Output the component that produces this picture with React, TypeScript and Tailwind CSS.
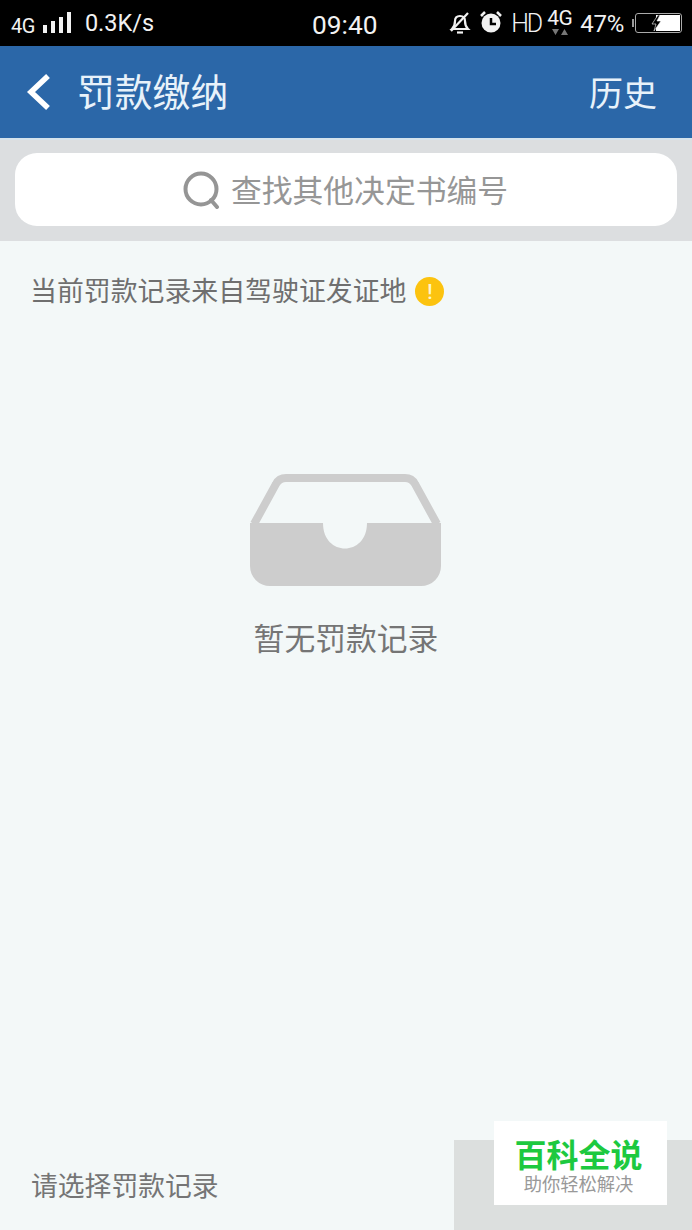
import React from 'react';

const cjk = "font-['Roboto','Noto_Sans_CJK_SC',sans-serif]";

const StatusBar = () => (
  <div className="h-[46px] bg-black text-[#f2f2f2] flex items-center relative font-['Roboto',sans-serif]">
    <span className="ml-[11px] mt-[5px] text-[20px] tracking-[-0.5px]">4G</span>
    <svg className="ml-[8px] mt-[0px]" width="28" height="22" viewBox="0 0 28 22" fill="#f2f2f2">
      <rect x="0" y="13" width="4" height="8" />
      <rect x="8" y="9" width="4" height="12" />
      <rect x="16" y="5" width="4" height="16" />
      <rect x="24" y="0" width="4" height="21" />
    </svg>
    <span className="ml-[14px] mt-[2px] text-[23.500px] leading-none">0.3K/s</span>
    <span className="absolute left-[312px] top-[10px] text-[26.300px] leading-[30px]">09:40</span>
    <div className="ml-auto mr-[10px] flex items-center h-full">
      {/* bell off */}
      <svg width="22" height="24" viewBox="0 0 22 24" fill="none" stroke="#f2f2f2" strokeWidth="2.200" className="mt-[-1px]">
        <path d="M3 18c2-2 3-4 3-8 0-3 2-5 5-5s5 2 5 5c0 4 1 6 3 8H3z" />
        <path d="M8 21.500h6" />
        <path d="M2 20L19 2" />
      </svg>
      <svg className="ml-[8px] mt-[-2px]" width="24" height="24" viewBox="0 0 24 24">
        <circle cx="12" cy="13" r="9.500" fill="#f2f2f2" />
        <path d="M12 8v6h5" fill="none" stroke="#000" strokeWidth="2.500" />
        <path d="M2 6l4-4M22 6l-4-4" stroke="#f2f2f2" strokeWidth="2.500" />
      </svg>
      <span className="ml-[8px] text-[25px] leading-none tracking-[-2px] font-light mt-[0px]">HD</span>
      <div className="ml-[6px] flex flex-col items-center mt-[-2px]">
        <span className="text-[21px] leading-[19px] tracking-[-0.5px]">4G</span>
        <svg width="16" height="8" viewBox="0 0 16 8" fill="#777">
          <path d="M0 1h7L3.500 7zM9 7h7l-3.500-6z" />
        </svg>
      </div>
      <span className="ml-[8px] text-[24px] leading-none mt-[1px] tracking-[-0.3px]">47%</span>
      <div className="ml-[8px] flex items-center mt-[0px]">
        <div className="w-[2px] h-[8px] bg-[#999] mr-[1px]" />
        <div className="w-[47px] h-[20px] border border-[#aaa] rounded-[3px] flex justify-end p-[1px]">
          <div className="w-[24px] h-full bg-white relative">
            <svg className="absolute left-[-7px] top-0" width="14" height="16" viewBox="0 0 14 16">
              <path d="M9 0L3 9h4l-2 7 7-10H8l3-6z" fill="#000" stroke="#fff" strokeWidth="0.600" />
            </svg>
          </div>
        </div>
      </div>
    </div>
  </div>
);

const EmptyIcon = () => (
  <svg width="192" height="114" viewBox="0 0 192 114">
    <path d="M4 50L26 10Q29 4 36 4H155Q162 4 165 10L187 50" fill="none" stroke="#cdcdcd" strokeWidth="8" />
    <path d="M0 49H73C73 83 117 83 117 49H191V92A20 20 0 0 1 171 112H20A20 20 0 0 1 0 92Z" fill="#cdcdcd" />
  </svg>
);

export default function App() {
  return (
    <div className={`relative w-[692px] h-[1230px] flex flex-col bg-[#f3f8f8] overflow-hidden ${cjk}`}>
      <StatusBar />
      <div className="h-[92px] bg-[#2b67a8] flex items-center text-[#e8f2fa]">
        <svg className="ml-[26px]" width="26" height="38" viewBox="0 0 26 38" fill="none" stroke="#fff" strokeWidth="5.500">
          <path d="M22 3L5 19l17 16" />
        </svg>
        <span className="ml-[25px] mt-[4px] text-[37.800px] leading-none">罚款缴纳</span>
        <span className="ml-auto mr-[35px] mt-[4px] text-[34px] leading-none">历史</span>
      </div>
      <div className="h-[103px] bg-[#dcdee0] border-t-2 border-[#d5e3ec] pt-[13px] px-[15px]">
        <div className="h-[73px] bg-white rounded-[22px] flex items-center justify-center">
          <svg className="ml-[-1px]" width="38" height="38" viewBox="0 0 38 38" fill="none" stroke="#959595" strokeWidth="4">
            <circle cx="18" cy="18" r="15.500" />
            <path d="M28 29l6 7" strokeLinecap="round" />
          </svg>
          <span className="ml-[10px] mt-[5px] text-[30.800px] leading-none text-[#969696]">查找其他决定书编号</span>
        </div>
      </div>
      <div className="flex-1 flex flex-col">
        <div className="pl-[30px] pt-[35px] flex items-center">
          <span className="text-[26.900px] leading-[30px] mt-[1px] text-[#6f6f6f]">当前罚款记录来自驾驶证发证地</span>
          <div className="ml-[9px] w-[29px] h-[29px] rounded-full bg-[#fcc30f] flex items-center justify-center text-[#fff6d0] font-medium text-[20px] leading-none">!</div>
        </div>
        <div className="mt-[167px] flex flex-col items-center">
          <EmptyIcon />
          <span className="mt-[37px] text-[30.800px] leading-none text-[#757575]">暂无罚款记录</span>
        </div>
      </div>
      <div className="h-[90px] flex items-center justify-between">
        <span className="ml-[31px] mt-[4px] text-[26.800px] leading-none text-[#757575]">请选择罚款记录</span>
        <div className="w-[238px] h-full bg-[#dcdfde]" />
      </div>
      <div className="absolute left-[494px] top-[1121px] w-[173px] h-[84px] bg-white flex flex-col items-center pt-[17px] pr-[4px]">
        <span className="text-[32px] leading-[36px] font-bold text-[#1dc93f]">百科全说</span>
        <span className="text-[18.300px] leading-[22px] text-[#999]">助你轻松解决</span>
      </div>
    </div>
  );
}
